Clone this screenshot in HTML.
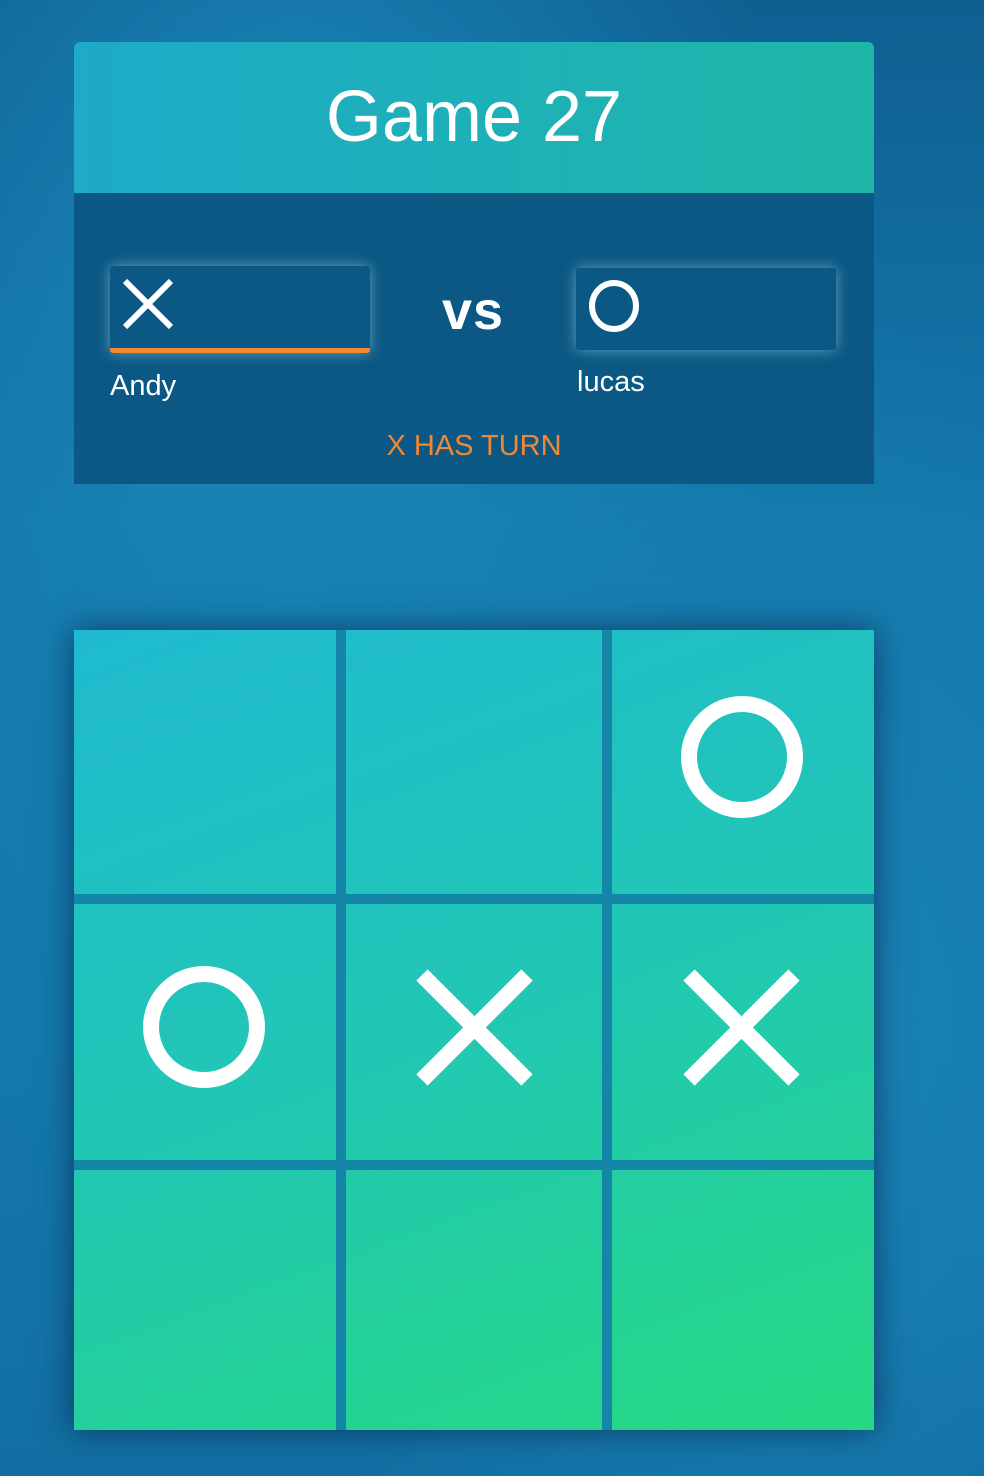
<!DOCTYPE html>
<html><head><style>
html,body{margin:0;padding:0}
body{width:984px;height:1476px;position:relative;overflow:hidden;font-family:"Liberation Sans",sans-serif;
background:radial-gradient(ellipse at 30% 20%,#1a86b8 0%,transparent 50%),radial-gradient(ellipse at 80% 70%,#1a82b4 0%,transparent 50%),linear-gradient(180deg,#0f5f92 0%,#1477ab 35%,#1479ad 70%,#126ea2 100%);}
.hdr{position:absolute;left:74px;top:42px;width:800px;height:151px;border-radius:6px 6px 0 0;background:linear-gradient(90deg,#1eaac8,#1fb6a8);color:#fff;font-size:72px;text-align:center;line-height:151px;letter-spacing:0px}
.pnl{position:absolute;left:74px;top:193px;width:800px;height:291px;background:#0b5884}
.box{position:absolute;background:#0b5884;border-radius:3px;box-shadow:0 0 14px rgba(160,220,240,.55)}
.name{position:absolute;color:#fff;font-size:29px}
.vs{position:absolute;left:442px;top:280px;color:#fff;font-size:54px;font-weight:bold;letter-spacing:1px}
.turn{position:absolute;left:0;width:948px;text-align:center;top:430px;color:#f3862f;font-size:29px}
.cells{position:absolute;left:74px;top:630px;width:800px;height:800px;background:linear-gradient(160deg,#1fbad0 0%,#22c7b3 50%,#26d982 100%);box-shadow:0 0 30px rgba(0,20,50,.6)}
.line{position:absolute;background:#1585a8}
</style></head><body>
<div class="hdr">Game 27</div>
<div class="pnl"></div>
<div class="box" style="left:110px;top:266px;width:260px;height:87px"></div>
<div style="position:absolute;left:110px;top:348px;width:260px;height:5px;background:#f3862f;border-radius:0 0 3px 3px"></div>
<svg style="position:absolute;left:110px;top:266px" width="80" height="80"><path d="M15 15 L61 61 M61 15 L15 61" stroke="#fff" stroke-width="6"/></svg>
<div class="box" style="left:576px;top:268px;width:260px;height:82px"></div>
<svg style="position:absolute;left:576px;top:268px" width="80" height="80"><ellipse cx="38" cy="38" rx="22" ry="23" fill="none" stroke="#fff" stroke-width="6"/></svg>
<div class="name" style="left:110px;top:370px">Andy</div>
<div class="name" style="left:577px;top:366px">lucas</div>
<div class="vs">vs</div>
<div class="turn">X HAS TURN</div>
<div class="cells"></div>
<div class="line" style="left:336px;top:630px;width:10px;height:800px"></div>
<div class="line" style="left:602px;top:630px;width:10px;height:800px"></div>
<div class="line" style="left:74px;top:894px;width:800px;height:10px"></div>
<div class="line" style="left:74px;top:1160px;width:800px;height:10px"></div>
<svg style="position:absolute;left:0;top:0" width="984" height="1476">
<g fill="none" stroke="#fff" stroke-width="16">
<circle cx="742" cy="757" r="53"/>
<circle cx="204" cy="1027" r="53"/>
<path d="M422 975 L527 1080 M527 975 L422 1080"/>
<path d="M689 975 L794 1080 M794 975 L689 1080"/>
</g></svg>
</body></html>
